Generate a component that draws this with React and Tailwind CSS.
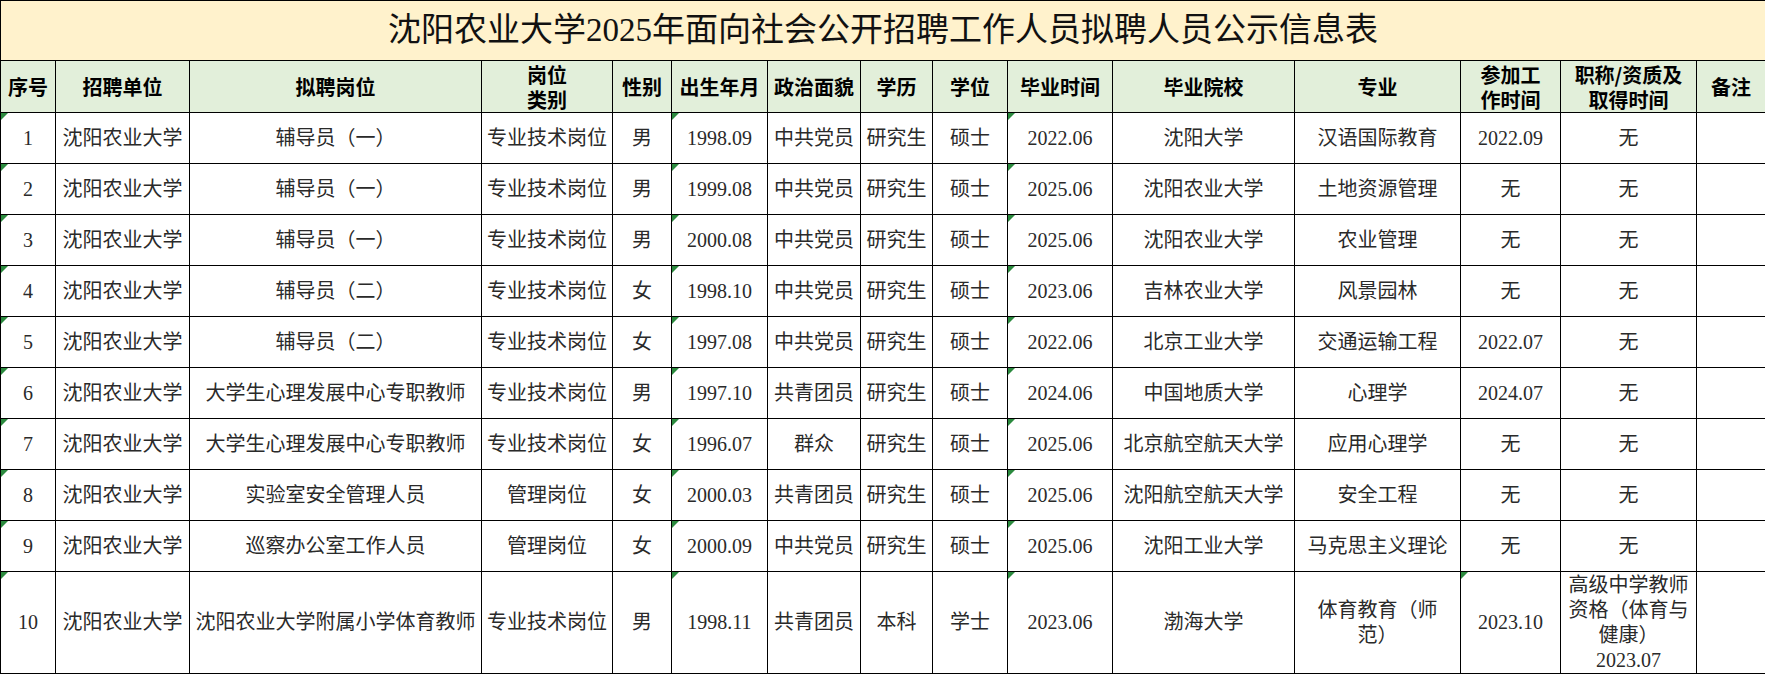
const cols = [55, 134, 292, 131, 59, 96, 93, 72, 75, 105, 182, 166, 100, 136, 69]

const heads = [
  '序号', '招聘单位', '拟聘岗位', <>岗位<br />类别</>, '性别', '出生年月', '政治面貌', '学历', '学位',
  '毕业时间', '毕业院校', '专业', <>参加工<br />作时间</>, <>职称/资质及<br />取得时间</>, '备注',
]

const rows = [
  ['1', '沈阳农业大学', '辅导员（一）', '专业技术岗位', '男', '1998.09', '中共党员', '研究生', '硕士', '2022.06', '沈阳大学', '汉语国际教育', '2022.09', '无', ''],
  ['2', '沈阳农业大学', '辅导员（一）', '专业技术岗位', '男', '1999.08', '中共党员', '研究生', '硕士', '2025.06', '沈阳农业大学', '土地资源管理', '无', '无', ''],
  ['3', '沈阳农业大学', '辅导员（一）', '专业技术岗位', '男', '2000.08', '中共党员', '研究生', '硕士', '2025.06', '沈阳农业大学', '农业管理', '无', '无', ''],
  ['4', '沈阳农业大学', '辅导员（二）', '专业技术岗位', '女', '1998.10', '中共党员', '研究生', '硕士', '2023.06', '吉林农业大学', '风景园林', '无', '无', ''],
  ['5', '沈阳农业大学', '辅导员（二）', '专业技术岗位', '女', '1997.08', '中共党员', '研究生', '硕士', '2022.06', '北京工业大学', '交通运输工程', '2022.07', '无', ''],
  ['6', '沈阳农业大学', '大学生心理发展中心专职教师', '专业技术岗位', '男', '1997.10', '共青团员', '研究生', '硕士', '2024.06', '中国地质大学', '心理学', '2024.07', '无', ''],
  ['7', '沈阳农业大学', '大学生心理发展中心专职教师', '专业技术岗位', '女', '1996.07', '群众', '研究生', '硕士', '2025.06', '北京航空航天大学', '应用心理学', '无', '无', ''],
  ['8', '沈阳农业大学', '实验室安全管理人员', '管理岗位', '女', '2000.03', '共青团员', '研究生', '硕士', '2025.06', '沈阳航空航天大学', '安全工程', '无', '无', ''],
  ['9', '沈阳农业大学', '巡察办公室工作人员', '管理岗位', '女', '2000.09', '中共党员', '研究生', '硕士', '2025.06', '沈阳工业大学', '马克思主义理论', '无', '无', ''],
]

const last = [
  '10', '沈阳农业大学', '沈阳农业大学附属小学体育教师', '专业技术岗位', '男', '1998.11', '共青团员', '本科', '学士', '2023.06', '渤海大学',
  <>体育教育（师<br />范）</>, '2023.10', <>高级中学教师<br />资格（体育与<br />健康）<br />2023.07</>, '',
]

// cells that carry Excel's green "number stored as text" corner
const flagged = (r, c) => c === 0 || c === 5 || c === 9 || (r === 9 && c === 12)

function Flag() {
  return <span className="absolute left-0 top-0 w-0 h-0 border-t-[7px] border-t-[#2b8a3e] border-r-[7px] border-r-transparent" />
}

export default function App() {
  return (
    <div className="w-[1765px] h-[674px] bg-white overflow-hidden">
      <table className="table-fixed border-collapse w-[1765px] font-['Liberation_Serif','Noto_Sans_CJK_SC',serif] text-[20px] text-[#2a2a2a]">
        <colgroup>
          {cols.map((w, i) => <col key={i} style={{ width: w }} />)}
        </colgroup>
        <tbody>
          <tr className="h-[60px] bg-[#fff2cc]">
            <td colSpan={15} className="border border-black text-center text-[33px] text-[#111] leading-none">
              沈阳农业大学2025年面向社会公开招聘工作人员拟聘人员公示信息表
            </td>
          </tr>
          <tr className="h-[52px] bg-[#e2efda]">
            {heads.map((h, i) => (
              <th key={i} className="border border-black text-center font-bold text-black leading-[25px] px-0 font-['Noto_Sans_CJK_SC',sans-serif] text-[20px]">
                {h}
              </th>
            ))}
          </tr>
          {rows.map((r, ri) => (
            <tr key={ri} className="h-[51px]">
              {r.map((v, ci) => (
                <td key={ci} className="relative border border-black text-center px-0 leading-none whitespace-nowrap">
                  {flagged(ri, ci) && <Flag />}
                  {v}
                </td>
              ))}
            </tr>
          ))}
          <tr className="h-[102px]">
            {last.map((v, ci) => (
              <td key={ci} className="relative border border-black text-center px-0 leading-[25px] whitespace-nowrap">
                {flagged(9, ci) && <Flag />}
                {v}
              </td>
            ))}
          </tr>
        </tbody>
      </table>
    </div>
  )
}
